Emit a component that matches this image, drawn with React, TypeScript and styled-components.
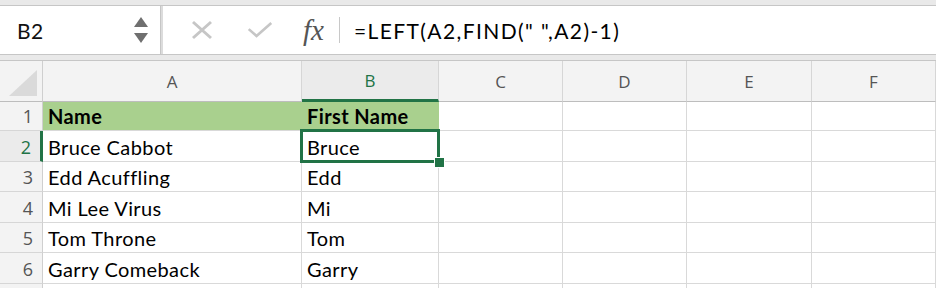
import React from 'react';
import styled, { createGlobalStyle } from 'styled-components';

const GlobalStyle = createGlobalStyle`
  html, body {
    margin: 0;
    padding: 0;
    background: #e9e9e9;
    overflow: hidden;
  }
`;

const Page = styled.div`
  width: 936px;
  height: 288px;
  overflow: hidden;
  padding-top: 5px;
  box-sizing: border-box;
  background: #e9e9e9;
  display: flex;
  flex-direction: column;
  gap: 5px;
`;

const FormulaBar = styled.div`
  flex-shrink: 0;
  display: flex;
  height: 50px;
  gap: 2px;
  border-top: 1px solid #c6c6c6;
  border-bottom: 1px solid #c6c6c6;
  background: #dcdcdc;
  box-sizing: border-box;
`;

const NameBox = styled.div`
  width: 161px;
  background: #fff;
  border-right: 1px solid #c6c6c6;
  display: flex;
  align-items: center;
  justify-content: space-between;
  padding: 0 12px 0 17px;
  box-sizing: border-box;
  font-family: 'Lato', 'Liberation Sans', sans-serif;
  font-size: 21px;
  letter-spacing: 0.5px;
  color: #111;
`;

const Spinner = styled.div`
  display: flex;
  flex-direction: column;
  gap: 6px;
  align-items: center;
`;

const Arrow = styled.div<{ $down?: boolean }>`
  width: 0;
  height: 0;
  border-left: 7px solid transparent;
  border-right: 7px solid transparent;
  ${(p) => (p.$down ? 'border-top: 10px solid #6f6f6f;' : 'border-bottom: 10px solid #6f6f6f;')}
`;

const FormulaArea = styled.div`
  flex: 1;
  background: #fff;
  display: flex;
  align-items: center;
  padding-left: 26px;
`;

const IconButton = styled.div`
  width: 26px;
  height: 26px;
  display: flex;
  align-items: center;
  justify-content: center;
  margin-right: 32px;
`;

const Fx = styled.span`
  font-family: 'Liberation Serif', 'DejaVu Serif', serif;
  font-style: italic;
  font-size: 29px;
  color: #555;
  margin-left: -2px;
  padding-right: 15px;
  border-right: 1px solid #c8c8c8;
  line-height: 26px;
`;

const FormulaText = styled.span`
  font-family: 'Lato', 'Liberation Sans', sans-serif;
  font-size: 21px;
  letter-spacing: 1.4px;
  color: #000;
  margin-left: 14px;
`;

const Grid = styled.div`
  flex-shrink: 0;
  display: grid;
  grid-template-columns: 43px 259px 137px 124px 124px 125px 1fr;
  grid-template-rows: 41px 29px 31px 30px 31px 30px 31px 30px;
  background: #fff;
  border-top: 1px solid #c6c6c6;
`;

const Corner = styled.div`
  position: relative;
  background: #f3f3f3;
  border-right: 1px solid #cfcfcf;
  border-bottom: 1px solid #bdbdbd;
  &::after {
    content: '';
    position: absolute;
    right: 5px;
    bottom: 5px;
    width: 0;
    height: 0;
    border-left: 28px solid transparent;
    border-bottom: 26px solid #dadada;
  }
`;

const ColHead = styled.div<{ $active?: boolean }>`
  background: ${(p) => (p.$active ? '#ebebeb' : '#f3f3f3')};
  border-right: 1px solid #d6d6d6;
  border-bottom: ${(p) => (p.$active ? '3px solid #217346' : '1px solid #bdbdbd')};
  display: flex;
  align-items: center;
  justify-content: center;
  font-family: 'Open Sans', 'Liberation Sans', sans-serif;
  font-size: 17px;
  color: ${(p) => (p.$active ? '#217346' : '#555')};
`;

const RowHead = styled.div<{ $active?: boolean }>`
  background: ${(p) => (p.$active ? '#ebebeb' : '#f3f3f3')};
  border-right: ${(p) => (p.$active ? '3px solid #217346' : '1px solid #cfcfcf')};
  border-bottom: 1px solid #d6d6d6;
  display: flex;
  align-items: flex-end;
  justify-content: flex-end;
  padding: 0 9px 2px 0;
  font-family: 'Open Sans', 'Liberation Sans', sans-serif;
  font-size: 18px;
  color: ${(p) => (p.$active ? '#217346' : '#555')};
`;

const Cell = styled.div<{ $header?: boolean; $selected?: boolean }>`
  position: relative;
  z-index: ${(p) => (p.$selected ? 2 : 'auto')};
  background: ${(p) => (p.$header ? '#a9d08e' : '#fff')};
  border-right: 1px solid ${(p) => (p.$header ? '#a9d08e' : '#d9d9d9')};
  border-bottom: 1px solid #d9d9d9;
  display: flex;
  align-items: flex-end;
  padding: 0 0 2px 5px;
  font-family: 'Lato', 'Liberation Sans', sans-serif;
  font-size: 20px;
  letter-spacing: 0.4px;
  font-weight: ${(p) => (p.$header ? 700 : 400)};
  color: #000;
  white-space: nowrap;
  ${(p) =>
    p.$selected &&
    `
    &::before {
      content: '';
      position: absolute;
      left: -2px;
      top: -2px;
      right: -2px;
      bottom: -2px;
      border: 3px solid #217346;
      pointer-events: none;
    }
    &::after {
      content: '';
      position: absolute;
      right: -7px;
      bottom: -7px;
      width: 9px;
      height: 9px;
      background: #217346;
      border: 1px solid #fff;
    }
  `}
`;

const columns = ['A', 'B', 'C', 'D', 'E', 'F'];

const rows: [string, string][] = [
  ['Name', 'First Name'],
  ['Bruce Cabbot', 'Bruce'],
  ['Edd Acuffling', 'Edd'],
  ['Mi Lee Virus', 'Mi'],
  ['Tom Throne', 'Tom'],
  ['Garry Comeback', 'Garry'],
  ['', ''],
];

const CrossIcon = () => (
  <svg width="24" height="20" viewBox="0 0 24 20">
    <path d="M3 2 L21 18 M21 2 L3 18" stroke="#c6c6c6" strokeWidth="3" fill="none" />
  </svg>
);

const CheckIcon = () => (
  <svg width="30" height="20" viewBox="0 0 30 20">
    <path d="M2 9 L11 17 L28 2" stroke="#c6c6c6" strokeWidth="3" fill="none" />
  </svg>
);

const App: React.FC = () => {
  return (
    <>
      <GlobalStyle />
      <Page>
        <FormulaBar>
          <NameBox>
            <span>B2</span>
            <Spinner>
              <Arrow />
              <Arrow $down />
            </Spinner>
          </NameBox>
          <FormulaArea>
            <IconButton>
              <CrossIcon />
            </IconButton>
            <IconButton>
              <CheckIcon />
            </IconButton>
            <Fx>fx</Fx>
            <FormulaText>=LEFT(A2,FIND(" ",A2)-1)</FormulaText>
          </FormulaArea>
        </FormulaBar>
        <Grid>
          <Corner />
          {columns.map((c) => (
            <ColHead key={c} $active={c === 'B'}>
              {c}
            </ColHead>
          ))}
          {rows.map(([name, first], i) => (
            <React.Fragment key={i}>
              <RowHead $active={i === 1}>{i < 6 ? i + 1 : ''}</RowHead>
              <Cell $header={i === 0}>{name}</Cell>
              <Cell $header={i === 0} $selected={i === 1}>
                {first}
              </Cell>
              <Cell />
              <Cell />
              <Cell />
              <Cell />
            </React.Fragment>
          ))}
        </Grid>
      </Page>
    </>
  );
};

export default App;
